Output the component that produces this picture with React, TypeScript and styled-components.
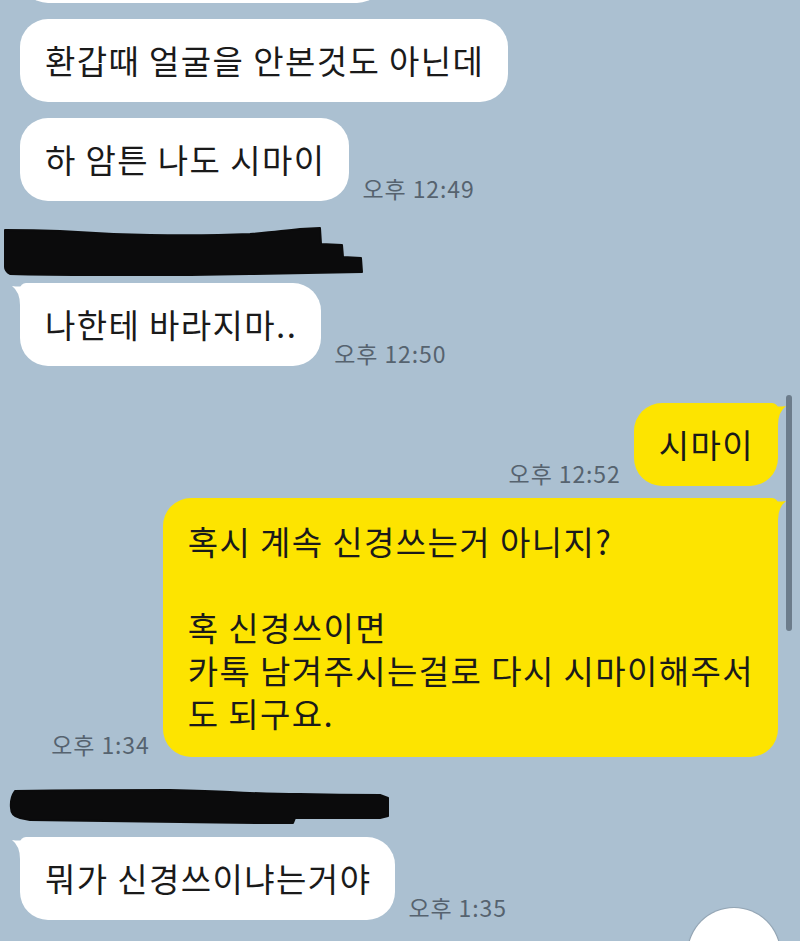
import React from "react";
import styled, { createGlobalStyle } from "styled-components";

const GlobalStyle = createGlobalStyle`
  html, body {
    margin: 0;
    padding: 0;
    background: #abc0d1;
  }
  body {
    font-family: "Noto Sans CJK KR", "Noto Sans", sans-serif;
  }
`;

const Screen = styled.div`
  position: relative;
  width: 800px;
  height: 941px;
  overflow: hidden;
  background: #abc0d1;
`;

const ChatList = styled.div`
  display: flex;
  flex-direction: column;
  padding: 0 22px 0 20px;
  margin-top: -80px;
`;

const Group = styled.div<{ $gapTop: number; $gap: number }>`
  display: flex;
  flex-direction: column;
  gap: ${(p) => p.$gap}px;
  margin-top: ${(p) => p.$gapTop}px;
`;

const Row = styled.div<{ $mine?: boolean }>`
  display: flex;
  align-items: flex-end;
  justify-content: ${(p) => (p.$mine ? "flex-end" : "flex-start")};
  gap: 13px;
`;

const Bubble = styled.div<{ $mine?: boolean; $tail?: boolean; $padY?: number }>`
  position: relative;
  background: ${(p) => (p.$mine ? "#fde400" : "#ffffff")};
  color: #1a1a1a;
  font-size: 33px;
  line-height: 43px;
  letter-spacing: 1.4px;
  padding: ${(p) => p.$padY ?? 20}px 24px ${(p) => p.$padY ?? 20}px 25px;
  border-radius: 28px;
  white-space: pre;
  ${(p) =>
    p.$tail
      ? p.$mine
        ? "border-top-right-radius: 6px;"
        : "border-top-left-radius: 6px;"
      : ""}
`;

/* the previous message, scrolled almost fully out of view */
const ClippedBubble = styled.div`
  width: 365px;
  height: 83px;
  border-radius: 28px;
  background: #ffffff;
`;

const TailSvg = styled.svg<{ $mine?: boolean }>`
  position: absolute;
  top: 0;
  ${(p) => (p.$mine ? "right: -8px;" : "left: -8px;")}
  width: 30px;
  height: 30px;
  ${(p) => (p.$mine ? "transform: scaleX(-1);" : "")}
`;

const Time = styled.span`
  font-size: 23px;
  line-height: 24px;
  letter-spacing: 0.9px;
  color: #56636f;
  white-space: nowrap;
  margin-bottom: 1px;
`;

const NameMask = styled.div<{ $shift: number }>`
  display: flex;
  margin-left: ${(p) => p.$shift}px;
`;

const ScrollThumb = styled.div`
  position: absolute;
  left: 786px;
  top: 395px;
  width: 6px;
  height: 236px;
  border-radius: 3px;
  background: #6c7c8b;
`;

const FloatButton = styled.div`
  position: absolute;
  left: 688px;
  top: 908px;
  width: 92px;
  height: 92px;
  border-radius: 50%;
  background: #ffffff;
  box-shadow: 0 0 0 1px rgba(90, 100, 110, 0.25), 0 1px 3px rgba(0, 0, 0, 0.15);
`;

const Tail = ({ mine }: { mine?: boolean }) => (
  <TailSvg $mine={mine} viewBox="0 0 30 30">
    <path
      d="M0,3 Q13,5 22,0 L30,0 L30,30 L8,30 L8,22 Q8,9 0,3 Z"
      fill={mine ? "#fde400" : "#ffffff"}
    />
  </TailSvg>
);

type MsgProps = {
  text: string;
  mine?: boolean;
  tail?: boolean;
  time?: string;
  padY?: number;
};

const Message = ({ text, mine, tail, time, padY }: MsgProps) => (
  <Row $mine={mine}>
    {mine && time && <Time>{time}</Time>}
    <Bubble $mine={mine} $tail={tail} $padY={padY}>
      {tail && <Tail mine={mine} />}
      {text}
    </Bubble>
    {!mine && time && <Time>{time}</Time>}
  </Row>
);

const Redaction1 = () => (
  <svg width="362" height="50" viewBox="0 0 362 50">
    <path
      d="M1,4 Q30,4 56,5 Q100,8 146,9 Q200,10 246,8 Q280,5 296,3 L316,2 L317,18 L338,19 L339,31 L357,32 L358,46 Q300,47 246,48 Q150,50 96,49 Q40,49 6,48 Q1,45 1,41 Z"
      fill="#0b0b0c"
      stroke="#0b0b0c"
      strokeWidth="2"
      strokeLinejoin="round"
    />
  </svg>
);

const Redaction2 = () => (
  <svg width="382" height="38" viewBox="0 0 382 38">
    <path
      d="M6,3 Q80,2 161,2 Q200,3 221,4 Q260,6 291,6 Q330,7 371,7 L379,10 L379,28 L371,30 L286,30 L284,35 Q220,35 171,34 Q90,33 21,32 L11,30 Q2,28 2,20 Q1,10 6,3 Z"
      fill="#0b0b0c"
      stroke="#0b0b0c"
      strokeWidth="2"
      strokeLinejoin="round"
    />
  </svg>
);

export default function App() {
  return (
    <>
      <GlobalStyle />
      <Screen>
        <ChatList>
          <Group $gapTop={0} $gap={16}>
            <Row>
              <ClippedBubble />
            </Row>
            <Message text="환갑때 얼굴을 안본것도 아닌데" />
            <Message text="하 암튼 나도 시마이" time="오후 12:49" />
          </Group>

          <Group $gapTop={25} $gap={7}>
            <NameMask $shift={-16}>
              <Redaction1 />
            </NameMask>
            <Message text="나한테 바라지마.." tail time="오후 12:50" />
          </Group>

          <Group $gapTop={37} $gap={12}>
            <Message text="시마이" mine tail time="오후 12:52" />
            <Message
              text={
                "혹시 계속 신경쓰는거 아니지?\n\n혹 신경쓰이면\n카톡 남겨주시는걸로 다시 시마이해주서\n도 되구요."
              }
              mine
              tail
              padY={22}
              time="오후 1:34"
            />
          </Group>

          <Group $gapTop={31} $gap={11}>
            <NameMask $shift={-11}>
              <Redaction2 />
            </NameMask>
            <Message text="뭐가 신경쓰이냐는거야" tail time="오후 1:35" />
          </Group>
        </ChatList>
        <ScrollThumb />
        <FloatButton />
      </Screen>
    </>
  );
}
